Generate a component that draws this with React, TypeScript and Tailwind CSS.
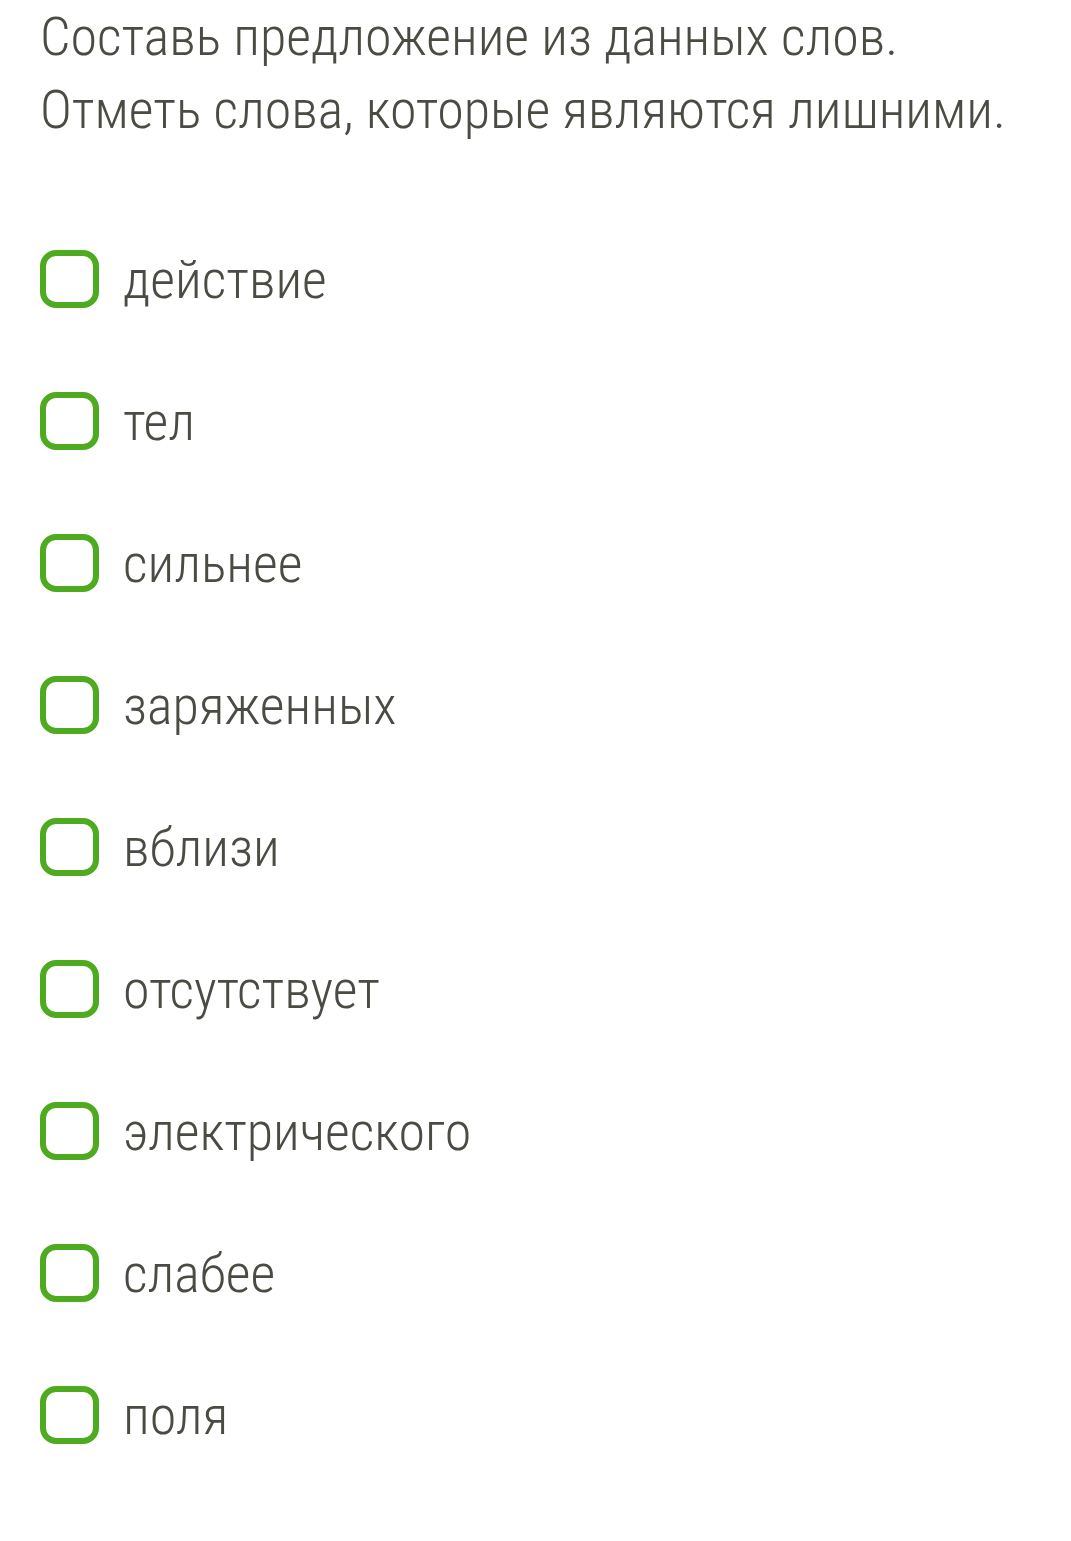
import React from "react";

const words = [
  "действие",
  "тел",
  "сильнее",
  "заряженных",
  "вблизи",
  "отсутствует",
  "электрического",
  "слабее",
  "поля",
];

export default function App() {
  return (
    <div
      className="w-[1071px] h-[1541px] bg-white pl-[40px] text-[#4b4b43]"
      style={{ fontFamily: "Roboto, 'Noto Sans', sans-serif" }}
    >
      <div className="text-[54px] leading-[73px] font-light font-stretch-condensed whitespace-nowrap">
        <div>Составь предложение из данных слов.</div>
        <div>Отметь слова, которые являются лишними.</div>
      </div>
      <div className="mt-[104px] flex flex-col gap-[84px]">
        {words.map((w) => (
          <div key={w} className="flex items-start h-[58px]">
            <div className="w-[59px] h-[58px] shrink-0 rounded-[16px] border-[6px] border-[#4eaa1f] bg-white" />
            <span className="ml-[24px] mt-[1px] text-[54px] leading-[58px] font-light font-stretch-condensed whitespace-nowrap">
              {w}
            </span>
          </div>
        ))}
      </div>
    </div>
  );
}
